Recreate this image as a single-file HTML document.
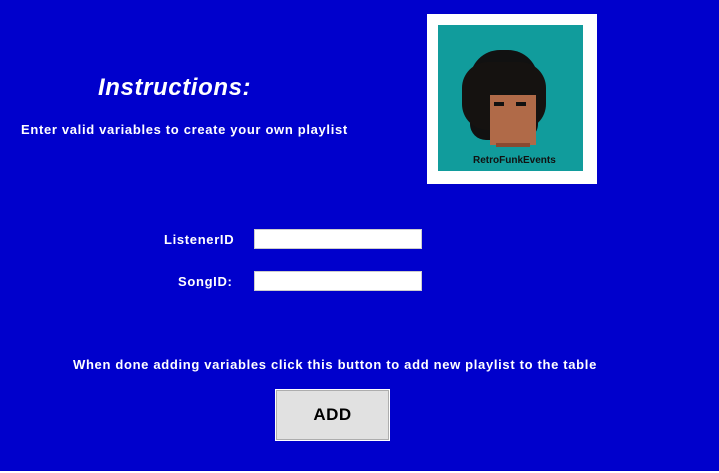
<!DOCTYPE html>
<html><head><style>
body{margin:0;width:719px;height:473px;background:#0000cc;position:relative;overflow:hidden;font-family:"Liberation Sans",sans-serif;color:#fff;font-weight:bold}
.a{position:absolute;white-space:nowrap}
.t{font-size:13px;letter-spacing:0.67px}
input{position:absolute;border:1px solid #ccc;background:#fff;height:18px;width:164px;padding:0;box-sizing:border-box}
</style></head><body>
<div class="a" style="left:98px;top:74px;font-size:24px;font-style:italic;letter-spacing:0.6px">Instructions:</div>
<div class="a t" style="left:21px;top:122px">Enter valid variables to create your own playlist</div>
<div class="a" style="left:427px;top:14px;width:170px;height:170px;background:#fff"></div>
<div class="a" style="left:438px;top:25px;width:145px;height:146px;background:#119c9c"></div>
<div class="a" style="left:470px;top:50px;width:68px;height:90px;background:#111;border-radius:30px 30px 16px 16px"></div>
<div class="a" style="left:462px;top:62px;width:84px;height:68px;background:#151210;border-radius:26px"></div>
<div class="a" style="left:490px;top:95px;width:46px;height:50px;background:#b06a48"></div>
<div class="a" style="left:494px;top:102px;width:10px;height:4px;background:#111"></div>
<div class="a" style="left:516px;top:102px;width:10px;height:4px;background:#111"></div>
<div class="a" style="left:496px;top:143px;width:34px;height:4px;background:#8a4a30"></div>
<div class="a" style="left:473px;top:155px;font-size:10px;color:#111">RetroFunkEvents</div>
<div class="a t" style="left:164px;top:232px">ListenerID</div>
<input style="left:254px;top:229px;height:20px;width:168px">
<div class="a t" style="left:178px;top:274px">SongID:</div>
<input style="left:254px;top:271px;height:20px;width:168px">
<div class="a t" style="left:73px;top:357px">When done adding variables click this button to add new playlist to the table</div>
<div class="a" style="left:276px;top:390px;width:113px;height:50px;box-sizing:border-box;background:#e1e1e1;border:1px solid #adadad;outline:1px solid #fff;color:#000;font-size:17px;letter-spacing:0.5px;text-align:center;line-height:48px">ADD</div>
<div class="a" style="left:0;top:471px;width:719px;height:2px;background:#fff"></div>
</body></html>
